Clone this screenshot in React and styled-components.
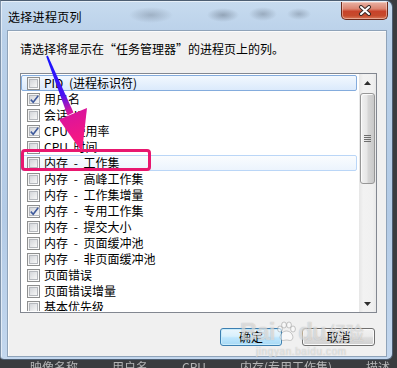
import React from 'react'
import styled, {createGlobalStyle} from 'styled-components'

const Global = createGlobalStyle`
  html, body {
    margin: 0;
    padding: 0;
    background: #3a3c3f;
  }
  body {
    font-family: "Noto Sans CJK SC", "Liberation Sans", sans-serif;
  }
`

const Screen = styled.div`
  position: relative;
  width: 397px;
  height: 368px;
  overflow: hidden;
  background: #3a3c3f;
  display: flex;
  flex-direction: column;
`

const Window = styled.div`
  box-sizing: border-box;
  width: 393px;
  height: 360px;
  flex-shrink: 0;
  border-radius: 0 7px 6px 4px;
  border: 1px solid #4d5e72;
  border-left-color: #7f93aa;
  background:
    radial-gradient(ellipse 22px 8px at 150px 14px, rgba(70, 80, 95, 0.28), transparent),
    radial-gradient(ellipse 16px 7px at 222px 14px, rgba(60, 70, 85, 0.35), transparent),
    radial-gradient(ellipse 14px 7px at 262px 13px, rgba(60, 70, 85, 0.3), transparent),
    radial-gradient(ellipse 12px 6px at 298px 13px, rgba(60, 70, 85, 0.28), transparent),
    linear-gradient(180deg, #c7dbef 0%, #b9d0e9 10%, #b3cbe6 60%, #c3d7ee 100%);
  display: flex;
  flex-direction: column;
  box-shadow: inset 1px 1px 0 rgba(255, 255, 255, 0.55);
`

const TitleBar = styled.div`
  height: 29px;
  display: flex;
  align-items: flex-start;
  padding-left: 7px;
`

const Title = styled.div`
  padding-top: 9px;
  font-size: 12px;
  line-height: 14px;
  color: #000;
  letter-spacing: 0.3px;
`

const CloseButton = styled.div`
  box-sizing: border-box;
  width: 47px;
  height: 18px;
  margin: 1px 4px 0 auto;
  border: 1px solid #6b2a1c;
  border-top: none;
  border-radius: 0 0 5px 5px;
  background: linear-gradient(180deg, #e8b2a4 0%, #dc8571 40%, #c8432a 55%, #c64a2c 80%, #d8795a 100%);
  box-shadow: inset 0 0 0 1px rgba(255, 230, 220, 0.45);
  display: flex;
  align-items: center;
  justify-content: center;
`

const Content = styled.div`
  box-sizing: border-box;
  height: 327px;
  margin: 0 5px 0 6px;
  background: #f0f0f0;
  border: 1px solid #8fa3b9;
  box-shadow: inset 1px 1px 0 #fbfbfb;
  display: flex;
  flex-direction: column;
`

const Instruction = styled.div`
  padding: 11px 0 0 12px;
  font-size: 12px;
  line-height: 14px;
  color: #000;
  white-space: pre;
`

const ListBox = styled.div`
  box-sizing: border-box;
  width: 357px;
  height: 240px;
  margin: 17px 0 0 12px;
  border: 1px solid #828790;
  background: #fff;
  display: flex;
  padding: 1px 0;
`

const Rows = styled.div`
  width: 336px;
  overflow: hidden;
  display: flex;
  flex-direction: column;
`

const rowBorder = {
  focus: '#84acdd',
  hover: '#bad6f7',
  none: 'transparent',
}

const rowBg = {
  focus: 'linear-gradient(180deg, #f2f8fe, #dbeafc)',
  hover: 'linear-gradient(180deg, #fafcfe, #ecf4fd)',
  none: 'transparent',
}

const Row = styled.div`
  box-sizing: border-box;
  flex-shrink: 0;
  height: 16px;
  display: flex;
  align-items: center;
  gap: 4px;
  padding-left: 5px;
  border: 1px solid ${p => rowBorder[p.$state]};
  border-radius: 2px;
  background: ${p => rowBg[p.$state]};
  font-size: 12px;
  line-height: 14px;
  word-spacing: 3px;
  color: #000;
  white-space: pre;
`

const Box = styled.span`
  box-sizing: border-box;
  width: 13px;
  height: 13px;
  flex-shrink: 0;
  border: 1px solid #8e8f8f;
  padding: 1px;
  background: linear-gradient(135deg, #f0f0f0, #ffffff);
  display: flex;
`

const BoxInner = styled.span`
  flex: 1;
  border: 1px solid #b5b8bd;
  background: linear-gradient(135deg, #d4d6da, #f7f7f7);
  display: flex;
  align-items: center;
  justify-content: center;
`

const ScrollBar = styled.div`
  width: 17px;
  margin: -1px 0 -1px 2px;
  background: linear-gradient(90deg, #e6e6e6, #f2f2f2 25%, #f0f0f0 80%, #e8e8e8);
  display: flex;
  flex-direction: column;
  align-items: center;
`

const ArrowCell = styled.div`
  height: 17px;
  width: 17px;
  display: flex;
  align-items: center;
  justify-content: center;
`

const Thumb = styled.div`
  box-sizing: border-box;
  width: 15px;
  height: 91px;
  margin-top: 2px;
  border: 1px solid #979797;
  border-radius: 3px;
  background: linear-gradient(90deg, #f1f1f1, #e6e6e6 45%, #d6d6d6 55%, #c9c9c9);
  box-shadow: inset 1px 1px 0 #fbfbfb;
  display: flex;
  align-items: center;
  justify-content: center;
`

const Spacer = styled.div`
  flex: 1;
`

const ButtonRow = styled.div`
  display: flex;
  justify-content: flex-end;
  gap: 20px;
  margin-top: 15px;
  padding-right: 11px;
`

const Button = styled.div`
  box-sizing: border-box;
  width: ${p => p.$w}px;
  height: 18px;
  border: 1px solid ${p => (p.$default ? '#3c7fb1' : '#707070')};
  border-radius: 3px;
  background: ${p =>
    p.$default
      ? 'linear-gradient(180deg, #eaf6fd 0%, #d9f0fc 45%, #bee6fd 55%, #a7d9f5 100%)'
      : 'linear-gradient(180deg, #f2f2f2 0%, #ebebeb 45%, #dddddd 55%, #cfcfcf 100%)'};
  box-shadow: inset 0 0 0 1px ${p => (p.$default ? '#c9ecfb' : '#fbfbfb')};
  display: flex;
  align-items: center;
  justify-content: center;
  font-size: 12px;
  line-height: 14px;
  color: #000;
`

const Behind = styled.div`
  height: 8px;
  overflow: hidden;
  display: flex;
  gap: 34px;
  padding-left: 30px;
  font-size: 12px;
  line-height: 14px;
  color: rgba(220, 220, 220, 0.75);
  filter: blur(0.7px);
  white-space: pre;
`

const Mark = styled.div`
  position: absolute;
  box-sizing: border-box;
  left: 21px;
  top: 149px;
  width: 130px;
  height: 22px;
  border: 3px solid #e8176f;
  border-radius: 4px;
  pointer-events: none;
`

const Overlay = styled.svg`
  position: absolute;
  left: 0;
  top: 0;
  pointer-events: none;
`

const Watermark = styled.div`
  position: absolute;
  left: 240px;
  top: 318px;
  display: flex;
  flex-direction: column;
  align-items: center;
  color: rgba(255, 255, 255, 0.55);
  text-shadow: 0 0 1px rgba(110, 110, 110, 0.5);
  pointer-events: none;
`

const MarkLine = styled.div`
  display: flex;
  align-items: center;
  font-family: "Liberation Sans", sans-serif;
  font-size: 24px;
  font-weight: bold;
  line-height: 28px;
  letter-spacing: -1px;
`

const MarkCn = styled.span`
  font-family: "Noto Sans CJK SC", sans-serif;
  font-size: 18px;
  font-weight: normal;
  margin-left: 3px;
`

const MarkUrl = styled.div`
  font-family: "Liberation Sans", sans-serif;
  font-size: 10px;
  line-height: 11px;
  letter-spacing: 0.6px;
`

const rows = [
  {label: 'PID (进程标识符)', state: 'focus'},
  {label: '用户名', checked: true},
  {label: '会话 ID'},
  {label: 'CPU 使用率', checked: true},
  {label: 'CPU 时间'},
  {label: '内存 - 工作集', state: 'hover'},
  {label: '内存 - 高峰工作集'},
  {label: '内存 - 工作集增量'},
  {label: '内存 - 专用工作集', checked: true},
  {label: '内存 - 提交大小'},
  {label: '内存 - 页面缓冲池'},
  {label: '内存 - 非页面缓冲池'},
  {label: '页面错误'},
  {label: '页面错误增量'},
  {label: '基本优先级'},
]

function CheckBox({checked}) {
  return (
    <Box>
      <BoxInner>
        {checked && (
          <svg width="9" height="9" viewBox="0 0 9 9">
            <path d="M0.8 4.6 L3.2 7.2 L8.2 0.8" fill="none" stroke="#3f5a9c" strokeWidth="1.6" />
          </svg>
        )}
      </BoxInner>
    </Box>
  )
}

function Paw() {
  return (
    <svg width="22" height="22" viewBox="0 0 22 22" style={{margin: '0 1px'}}>
      <g fill="rgba(255,255,255,0.55)" stroke="rgba(120,120,120,0.5)" strokeWidth="0.8">
        <ellipse cx="5" cy="8" rx="2.4" ry="3" />
        <ellipse cx="9" cy="4" rx="2.4" ry="3" />
        <ellipse cx="14" cy="4" rx="2.4" ry="3" />
        <ellipse cx="18" cy="8" rx="2.4" ry="3" />
        <path d="M11.5 10 C7 10 4 15 5.5 18 C7 20.5 9.5 19 11.5 19 C13.5 19 16 20.5 17.5 18 C19 15 16 10 11.5 10 Z" />
      </g>
    </svg>
  )
}

function Arrow() {
  return (
    <Overlay width="397" height="368">
      <defs>
        <linearGradient id="arrowFill" gradientUnits="userSpaceOnUse" x1="47" y1="56" x2="80" y2="150">
          <stop offset="0" stopColor="#1414ff" />
          <stop offset="0.42" stopColor="#4a14f4" />
          <stop offset="0.6" stopColor="#d8149e" />
          <stop offset="1" stopColor="#ff1a7a" />
        </linearGradient>
      </defs>
      <polygon points="46.2,56.4 47.8,55.6 73.5,112.5 67.5,115.5" fill="url(#arrowFill)" />
      <polygon points="87,108 59,119.5 82,152" fill="url(#arrowFill)" />
    </Overlay>
  )
}

export default function App() {
  return (
    <Screen>
      <Global />
      <Window>
        <TitleBar>
          <Title>选择进程页列</Title>
          <CloseButton>
            <svg width="14" height="11" viewBox="0 0 14 11">
              <path d="M3 2 L11 9 M11 2 L3 9" stroke="#3b2a26" strokeWidth="4" strokeLinecap="round" />
              <path d="M3 2 L11 9 M11 2 L3 9" stroke="#ffffff" strokeWidth="2" strokeLinecap="round" />
            </svg>
          </CloseButton>
        </TitleBar>
        <Content>
          <Instruction>请选择将显示在“任务管理器”的进程页上的列。</Instruction>
          <ListBox>
            <Rows>
              {rows.map((r, i) => (
                <Row key={i} $state={r.state || 'none'}>
                  <CheckBox checked={r.checked} />
                  <span>{r.label}</span>
                </Row>
              ))}
            </Rows>
            <ScrollBar>
              <ArrowCell>
                <svg width="7" height="4" viewBox="0 0 7 4">
                  <path d="M0 4 L3.5 0 L7 4 Z" fill="#2e2e2e" />
                </svg>
              </ArrowCell>
              <Thumb>
                <svg width="7" height="7" viewBox="0 0 7 7">
                  <path d="M0 0.5 H7 M0 2.5 H7 M0 4.5 H7 M0 6.5 H7" stroke="#6e6e6e" strokeWidth="1" />
                </svg>
              </Thumb>
              <Spacer />
              <ArrowCell>
                <svg width="7" height="4" viewBox="0 0 7 4">
                  <path d="M0 0 L7 0 L3.5 4 Z" fill="#2e2e2e" />
                </svg>
              </ArrowCell>
            </ScrollBar>
          </ListBox>
          <ButtonRow>
            <Button $w={62} $default>确定</Button>
            <Button $w={73}>取消</Button>
          </ButtonRow>
        </Content>
      </Window>
      <Behind>
        <span>映像名称</span>
        <span>用户名</span>
        <span>CPU</span>
        <span>内存(专用工作集)</span>
        <span>描述</span>
      </Behind>
      <Mark />
      <Arrow />
      <Watermark>
        <MarkLine>
          Bai<Paw />du<MarkCn>经验</MarkCn>
        </MarkLine>
        <MarkUrl>jingyan.baidu.com</MarkUrl>
      </Watermark>
    </Screen>
  )
}
